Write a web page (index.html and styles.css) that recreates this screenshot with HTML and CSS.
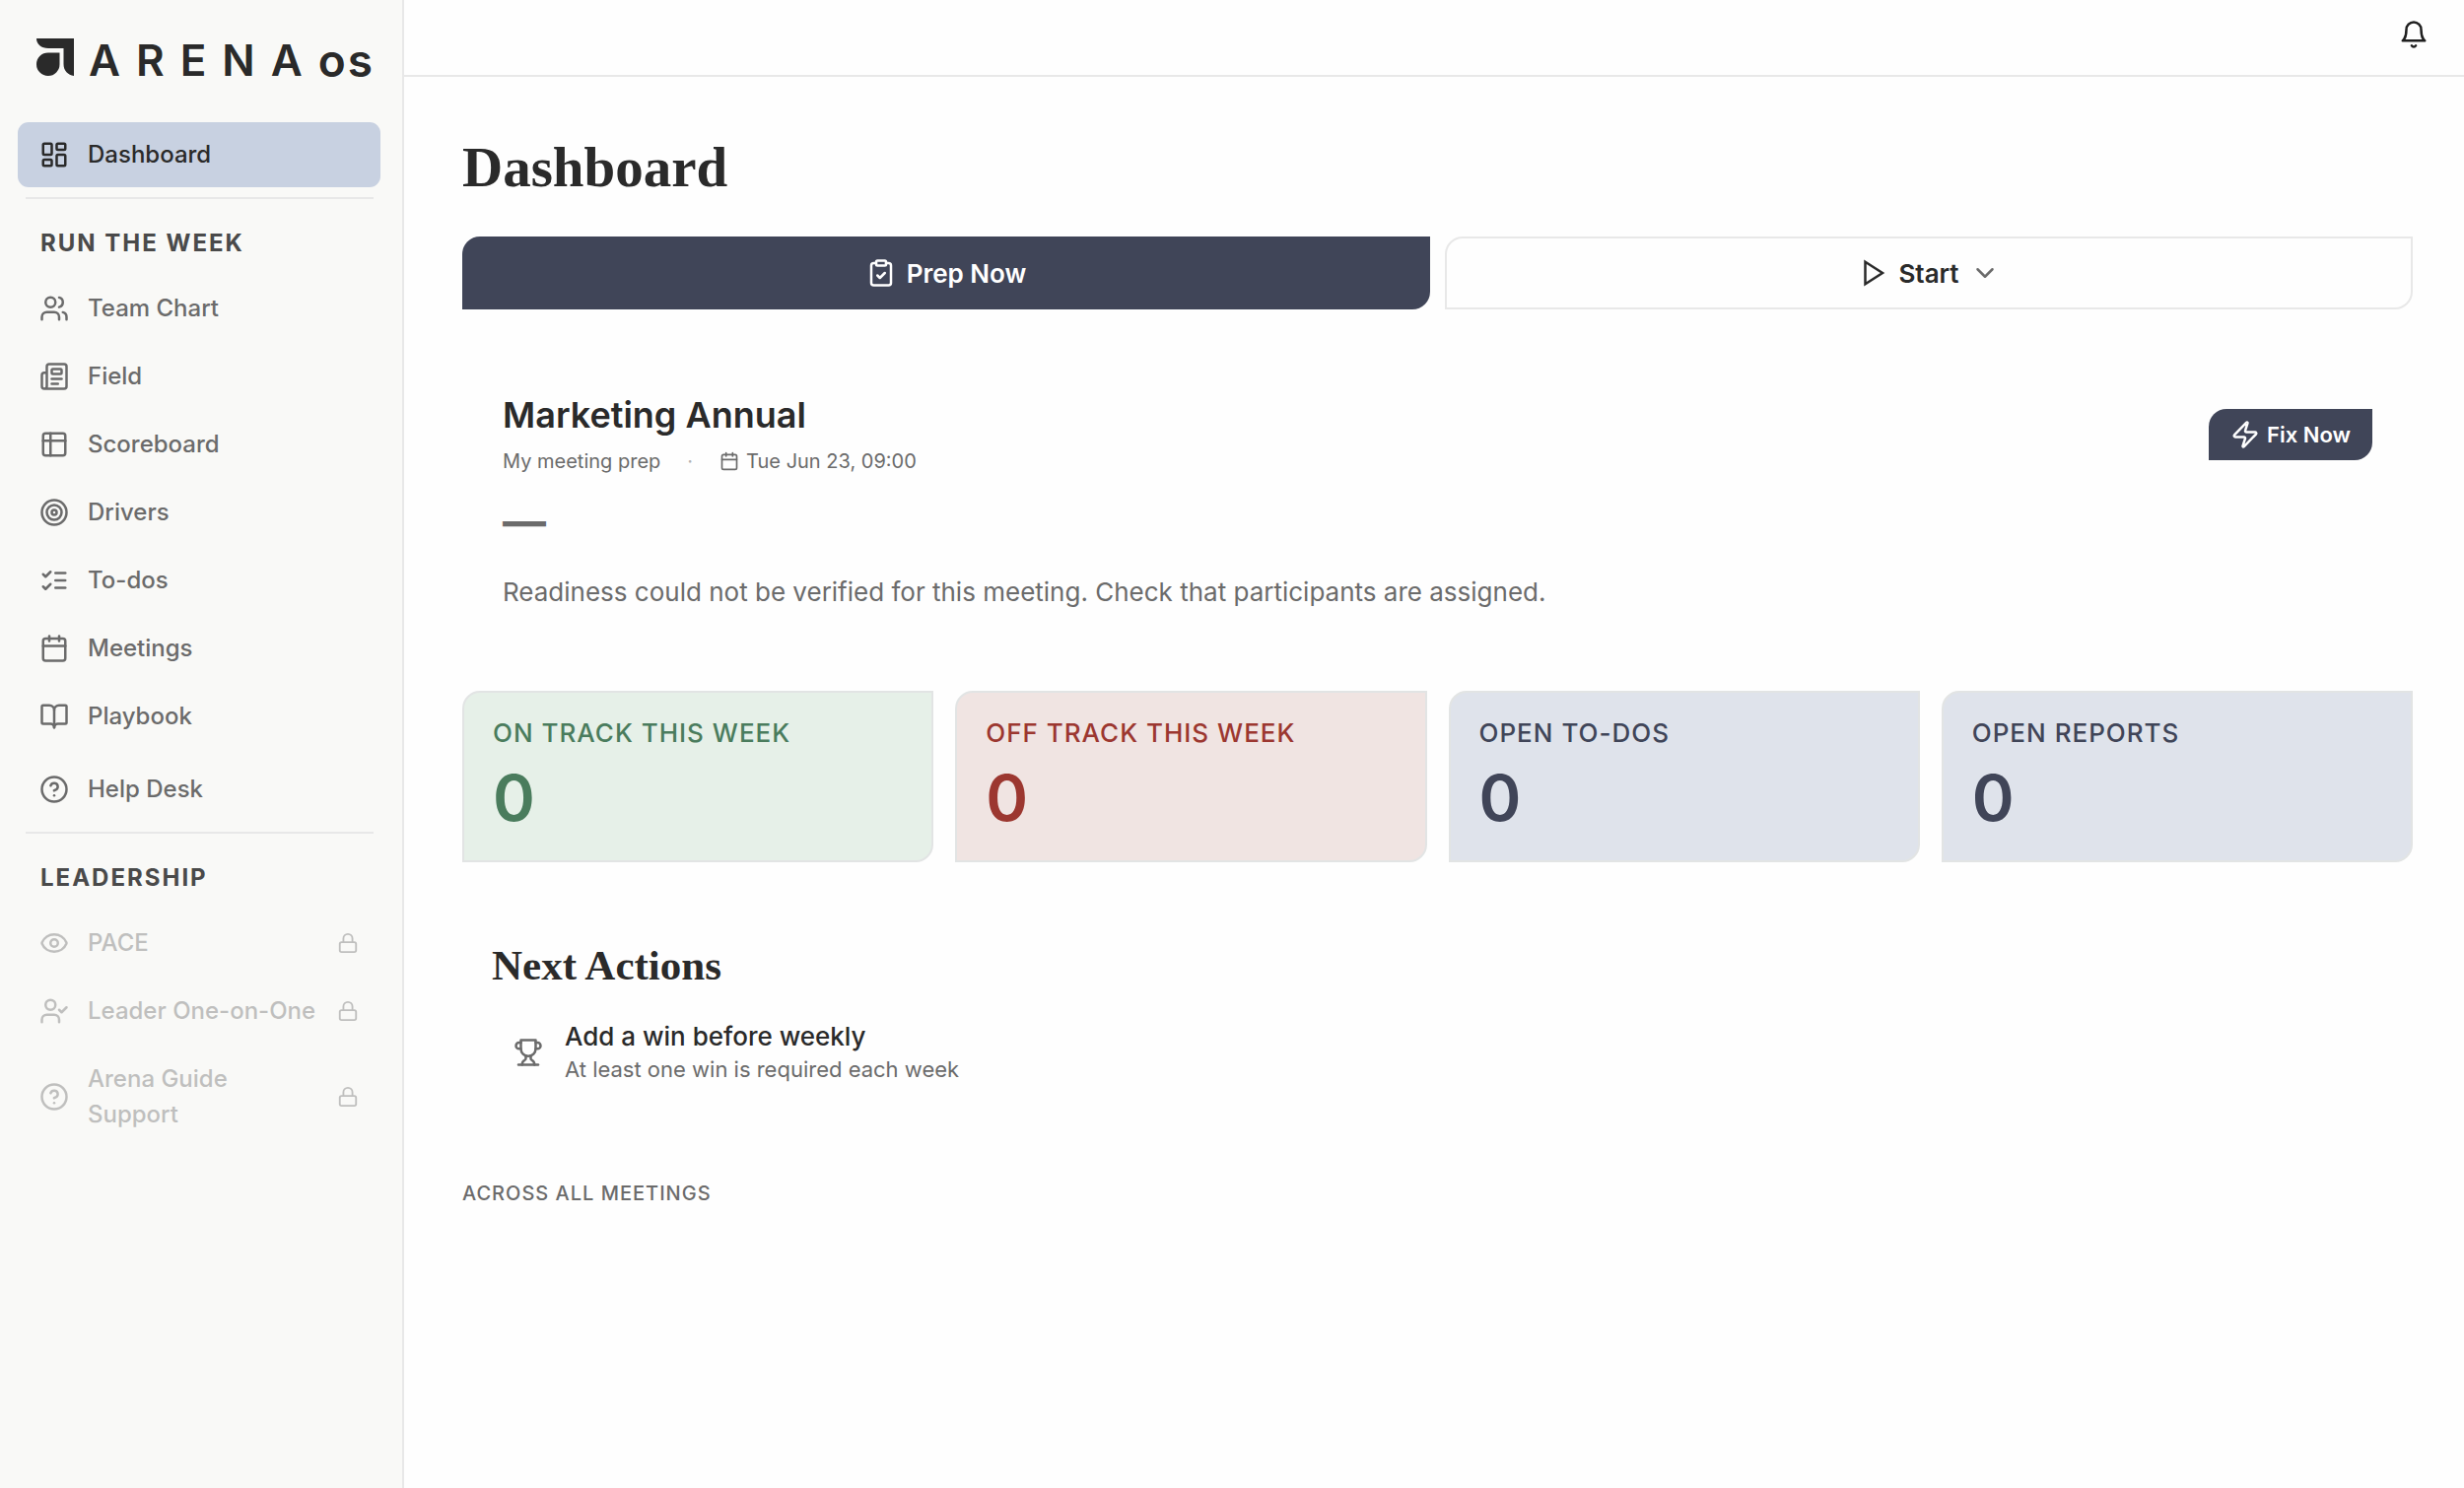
FILE: index.html
```html
<!DOCTYPE html>
<html lang="en">
<head>
    <meta charset="UTF-8">
    <meta name="viewport" content="width=device-width, initial-scale=1.0">
    <title>Dashboard - Arena OS</title>
    <link rel="stylesheet" href="styles.css">
</head>
<body>
    <div class="app">
        <!-- Sidebar -->
        <aside class="sidebar">
            <a class="logo" href="#" aria-label="Arena OS">
                <svg class="logo-mark" viewBox="0 0 38 38">
                    <path d="M0 0H38V38C32 37 27.500 33 27.500 26V10H12C5 10 0 6 0 0Z"/>
                    <path d="M12 14.500H23.500V26A11.750 11.750 0 1 1 12 14.500Z"/>
                </svg>
                <span class="logo-name">ARENA</span>
                <span class="logo-suffix">os</span>
            </a>

            <nav>
                <ul class="nav-list">
                    <li><a class="nav-link active" href="#">
                        <svg class="icon" viewBox="0 0 24 24"><rect x="3" y="3" width="7" height="9" rx="1"/><rect x="14" y="3" width="7" height="5" rx="1"/><rect x="14" y="12" width="7" height="9" rx="1"/><rect x="3" y="16" width="7" height="5" rx="1"/></svg>
                        <span>Dashboard</span>
                    </a></li>
                </ul>

                <h2 class="nav-heading">RUN THE WEEK</h2>
                <ul class="nav-list">
                    <li><a class="nav-link" href="#">
                        <svg class="icon" viewBox="0 0 24 24"><path d="M16 21v-2a4 4 0 0 0-4-4H6a4 4 0 0 0-4 4v2"/><circle cx="9" cy="7" r="4"/><path d="M22 21v-2a4 4 0 0 0-3-3.870"/><path d="M16 3.130a4 4 0 0 1 0 7.750"/></svg>
                        <span>Team Chart</span>
                    </a></li>
                    <li><a class="nav-link" href="#">
                        <svg class="icon" viewBox="0 0 24 24"><path d="M15 18h-5"/><path d="M18 14h-8"/><path d="M4 22h16a2 2 0 0 0 2-2V4a2 2 0 0 0-2-2H8a2 2 0 0 0-2 2v16a2 2 0 0 1-4 0v-9a2 2 0 0 1 2-2h2"/><rect width="8" height="4" x="10" y="6" rx="1"/></svg>
                        <span>Field</span>
                    </a></li>
                    <li><a class="nav-link" href="#">
                        <svg class="icon" viewBox="0 0 24 24"><rect x="3" y="3" width="18" height="18" rx="2"/><path d="M3 9h18"/><path d="M9 3v18"/></svg>
                        <span>Scoreboard</span>
                    </a></li>
                    <li><a class="nav-link" href="#">
                        <svg class="icon" viewBox="0 0 24 24"><circle cx="12" cy="12" r="10"/><circle cx="12" cy="12" r="6"/><circle cx="12" cy="12" r="2"/></svg>
                        <span>Drivers</span>
                    </a></li>
                    <li><a class="nav-link" href="#">
                        <svg class="icon" viewBox="0 0 24 24"><path d="m3 17 2 2 4-4"/><path d="m3 7 2 2 4-4"/><path d="M13 6h8"/><path d="M13 12h8"/><path d="M13 18h8"/></svg>
                        <span>To-dos</span>
                    </a></li>
                    <li><a class="nav-link" href="#">
                        <svg class="icon" viewBox="0 0 24 24"><path d="M8 2v4"/><path d="M16 2v4"/><rect width="18" height="18" x="3" y="4" rx="2"/><path d="M3 10h18"/></svg>
                        <span>Meetings</span>
                    </a></li>
                    <li><a class="nav-link" href="#">
                        <svg class="icon" viewBox="0 0 24 24"><path d="M12 7v14"/><path d="M3 18a1 1 0 0 1-1-1V4a1 1 0 0 1 1-1h5a4 4 0 0 1 4 4 4 4 0 0 1 4-4h5a1 1 0 0 1 1 1v13a1 1 0 0 1-1 1h-6a3 3 0 0 0-3 3 3 3 0 0 0-3-3z"/></svg>
                        <span>Playbook</span>
                    </a></li>
                </ul>
                <ul class="nav-list nav-help">
                    <li><a class="nav-link" href="#">
                        <svg class="icon" viewBox="0 0 24 24"><circle cx="12" cy="12" r="10"/><path d="M9.090 9a3 3 0 0 1 5.830 1c0 2-3 3-3 3"/><path d="M12 17h.01"/></svg>
                        <span>Help Desk</span>
                    </a></li>
                </ul>

                <h2 class="nav-heading">LEADERSHIP</h2>
                <ul class="nav-list">
                    <li><a class="nav-link locked" href="#" aria-disabled="true">
                        <svg class="icon" viewBox="0 0 24 24"><path d="M2.062 12.348a1 1 0 0 1 0-.696 10.750 10.750 0 0 1 19.876 0 1 1 0 0 1 0 .696 10.750 10.750 0 0 1-19.876 0"/><circle cx="12" cy="12" r="3"/></svg>
                        <span>PACE</span>
                        <svg class="icon lock" viewBox="0 0 24 24"><rect width="18" height="11" x="3" y="11" rx="2"/><path d="M7 11V7a5 5 0 0 1 10 0v4"/></svg>
                    </a></li>
                    <li><a class="nav-link locked" href="#" aria-disabled="true">
                        <svg class="icon" viewBox="0 0 24 24"><path d="m16 11 2 2 4-4"/><path d="M16 21v-2a4 4 0 0 0-4-4H6a4 4 0 0 0-4 4v2"/><circle cx="9" cy="7" r="4"/></svg>
                        <span>Leader One-on-One</span>
                        <svg class="icon lock" viewBox="0 0 24 24"><rect width="18" height="11" x="3" y="11" rx="2"/><path d="M7 11V7a5 5 0 0 1 10 0v4"/></svg>
                    </a></li>
                    <li><a class="nav-link locked" href="#" aria-disabled="true">
                        <svg class="icon" viewBox="0 0 24 24"><circle cx="12" cy="12" r="10"/><path d="M9.090 9a3 3 0 0 1 5.830 1c0 2-3 3-3 3"/><path d="M12 17h.01"/></svg>
                        <span>Arena Guide Support</span>
                        <svg class="icon lock" viewBox="0 0 24 24"><rect width="18" height="11" x="3" y="11" rx="2"/><path d="M7 11V7a5 5 0 0 1 10 0v4"/></svg>
                    </a></li>
                </ul>
            </nav>
        </aside>

        <div class="page">
            <header class="topbar">
                <button class="bell-button" type="button" aria-label="Notifications">
                    <svg class="icon" viewBox="0 0 24 24"><path d="M6 8a6 6 0 0 1 12 0c0 7 3 9 3 9H3s3-2 3-9"/><path d="M10.300 21a1.940 1.940 0 0 0 3.400 0"/></svg>
                </button>
            </header>

            <main class="content">
                <h1>Dashboard</h1>

                <div class="actions">
                    <button class="btn btn-primary" type="button">
                        <svg class="icon" viewBox="0 0 24 24"><rect width="8" height="4" x="8" y="2" rx="1"/><path d="M16 4h2a2 2 0 0 1 2 2v14a2 2 0 0 1-2 2H6a2 2 0 0 1-2-2V6a2 2 0 0 1 2-2h2"/><path d="m9 14 2 2 4-4"/></svg>
                        Prep Now
                    </button>
                    <button class="btn btn-outline" type="button">
                        <svg class="icon play" viewBox="0 0 24 24"><path d="M6 3 20 12 6 21Z"/></svg>
                        Start
                        <svg class="icon chevron" viewBox="0 0 24 24"><path d="m6 9 6 6 6-6"/></svg>
                    </button>
                </div>

                <!-- Next meeting -->
                <section class="meeting">
                    <div class="meeting-top">
                        <div>
                            <h2>Marketing Annual</h2>
                            <div class="meeting-meta">
                                <span>My meeting prep</span>
                                <span class="dot">·</span>
                                <span class="meeting-date">
                                    <svg class="icon" viewBox="0 0 24 24"><path d="M8 2v4"/><path d="M16 2v4"/><rect width="18" height="18" x="3" y="4" rx="2"/><path d="M3 10h18"/></svg>
                                    Tue Jun 23, 09:00
                                </span>
                            </div>
                        </div>
                        <button class="btn-fix" type="button">
                            <svg class="icon" viewBox="0 0 24 24"><path d="M4 14a1 1 0 0 1-.780-1.630l9.900-10.200a.5.5 0 0 1 .860.460l-1.920 6.020A1 1 0 0 0 13 10h7a1 1 0 0 1 .780 1.630l-9.900 10.200a.5.5 0 0 1-.860-.460l1.920-6.020A1 1 0 0 0 11 14z"/></svg>
                            Fix Now
                        </button>
                    </div>
                    <div class="readiness">—</div>
                    <p class="meeting-note">Readiness could not be verified for this meeting. Check that participants are assigned.</p>
                </section>

                <!-- Counters -->
                <section class="stats">
                    <div class="stat green">
                        <div class="stat-label">ON TRACK THIS WEEK</div>
                        <div class="stat-value">0</div>
                    </div>
                    <div class="stat red">
                        <div class="stat-label">OFF TRACK THIS WEEK</div>
                        <div class="stat-value">0</div>
                    </div>
                    <div class="stat blue">
                        <div class="stat-label">OPEN TO-DOS</div>
                        <div class="stat-value">0</div>
                    </div>
                    <div class="stat blue">
                        <div class="stat-label">OPEN REPORTS</div>
                        <div class="stat-value">0</div>
                    </div>
                </section>

                <section class="next">
                    <h2>Next Actions</h2>
                    <a class="next-item" href="#">
                        <svg class="icon" viewBox="0 0 24 24"><path d="M6 9H4.500a2.500 2.500 0 0 1 0-5H6"/><path d="M18 9h1.500a2.500 2.500 0 0 0 0-5H18"/><path d="M4 22h16"/><path d="M10 14.660V17c0 .550-.470.980-.970 1.210C7.850 18.750 7 20.240 7 22"/><path d="M14 14.660V17c0 .550.470.980.970 1.210C16.150 18.750 17 20.240 17 22"/><path d="M18 2H6v7a6 6 0 0 0 12 0V2Z"/></svg>
                        <span class="next-text">
                            <span class="next-title">Add a win before weekly</span>
                            <span class="next-sub">At least one win is required each week</span>
                        </span>
                    </a>
                </section>

                <h3 class="across">ACROSS ALL MEETINGS</h3>
            </main>
        </div>
    </div>
</body>
</html>
```
FILE: styles.css
```css
* {
  margin: 0;
  padding: 0;
  box-sizing: border-box;
}

body {
  font-family: Inter, "Liberation Sans", sans-serif;
  font-size: 24px;
  line-height: 36px;
  color: #2a2a2a;
  background-color: #fefefe;
}

a {
  color: inherit;
  text-decoration: none;
}

button {
  font-family: inherit;
  cursor: pointer;
}

ul {
  list-style: none;
}

.icon {
  width: 30px;
  height: 30px;
  flex-shrink: 0;
  fill: none;
  stroke: currentColor;
  stroke-width: 2;
  stroke-linecap: round;
  stroke-linejoin: round;
}

.app {
  display: flex;
  min-height: 100vh;
}

/* Sidebar */
.sidebar {
  width: 410px;
  flex-shrink: 0;
  padding: 39px 22px 38px 18px;
  background-color: #f9f9f7;
  border-right: 2px solid #e8e8e8;
}

.logo {
  display: flex;
  align-items: flex-end;
  height: 38px;
  margin: 0 0 47px 19px;
  line-height: 32px;
  font-weight: 600;
}

.logo-mark {
  width: 38px;
  height: 38px;
  margin-right: 15px;
  fill: #2a2a2a;
}

.logo-name {
  font-size: 44px;
  letter-spacing: 16px;
}

.logo-suffix {
  font-size: 46px;
  letter-spacing: 2px;
}

.nav-list {
  display: flex;
  flex-direction: column;
  gap: 3px;
}

.nav-help {
  margin-top: 8px;
}

.nav-link {
  display: flex;
  align-items: center;
  gap: 19px;
  padding: 15px 22px;
  border-radius: 11px;
  font-weight: 500;
  color: #6b6b6b;
}

.nav-link span {
  flex: 1;
}

.nav-link.active {
  background-color: #c8d1e1;
  color: #2a2a2a;
}

.nav-link.locked {
  opacity: 0.4;
}

.nav-link .lock {
  width: 22px;
  height: 22px;
}

.nav-heading {
  margin: 10px 7px 0 8px;
  padding: 27px 15px 15px;
  border-top: 2px solid #e8e8e8;
  font-size: 24px;
  font-weight: 700;
  letter-spacing: 2px;
  color: #4a4a4a;
}

/* Top bar */
.page {
  flex: 1;
  min-width: 0;
}

.topbar {
  display: flex;
  justify-content: flex-end;
  padding: 20px 36px 26px;
  border-bottom: 2px solid #e8e8e8;
}

.bell-button {
  display: flex;
  border: none;
  background: none;
  color: #1f1f1f;
}

.content {
  padding: 58px 52px 59px 59px;
}

h1,
.next h2 {
  font-family: "Liberation Serif", serif;
  font-weight: 700;
}

h1 {
  font-size: 57px;
  line-height: 68px;
}

/* Buttons */
.actions {
  display: grid;
  grid-template-columns: 1fr 1fr;
  gap: 15px;
  margin-top: 36px;
}

.btn {
  display: flex;
  justify-content: center;
  align-items: center;
  gap: 11px;
  height: 74px;
  border-radius: 18px 0;
  font-size: 26px;
  font-weight: 600;
}

.btn-primary {
  border: none;
  background-color: #404558;
  color: #fff;
}

.btn-outline {
  border: 2px solid #e8e8e8;
  background-color: #fefefe;
  color: #2a2a2a;
}

.play {
  stroke-linejoin: miter;
}

.chevron {
  color: #6b6b6b;
}

/* Meeting card */
.meeting {
  padding: 83px 41px 0;
}

.meeting-top {
  display: flex;
  justify-content: space-between;
  align-items: center;
}

.meeting h2 {
  font-size: 36px;
  line-height: 48px;
  font-weight: 600;
}

.meeting-meta {
  display: flex;
  align-items: center;
  gap: 27px;
  margin-top: 7px;
  font-size: 20px;
  line-height: 32px;
  color: #6b6b6b;
}

.dot {
  opacity: 0.5;
}

.meeting-date {
  display: flex;
  align-items: center;
  gap: 7px;
}

.meeting-date .icon {
  width: 20px;
  height: 20px;
}

.btn-fix {
  display: flex;
  align-items: center;
  gap: 7px;
  height: 52px;
  padding: 0 22px;
  border: none;
  border-radius: 18px 0;
  background-color: #404558;
  color: #fff;
  font-size: 22px;
  font-weight: 600;
}

.readiness {
  margin-top: 17px;
  font-size: 44px;
  line-height: 56px;
  font-weight: 700;
  color: #6b6b6b;
}

.meeting-note {
  margin-top: 24px;
  font-size: 26px;
  line-height: 40px;
  color: #6b6b6b;
}

/* Stats */
.stats {
  display: grid;
  grid-template-columns: repeat(4, 1fr);
  gap: 22px;
  margin-top: 80px;
}

.stat {
  padding: 21px 29px 26px;
  border: 2px solid #e2e4e4;
  border-radius: 18px 0;
}

.stat-label {
  font-size: 26px;
  line-height: 40px;
  font-weight: 500;
  letter-spacing: 1px;
}

.stat-value {
  margin-top: 9px;
  font-size: 65px;
  line-height: 74px;
  font-weight: 600;
}

.green {
  background-color: #e6f0e8;
  color: #4a7c5d;
}

.red {
  background-color: #f0e4e2;
  color: #9c3730;
}

.blue {
  background-color: #dfe3eb;
  color: #404558;
}

/* Next actions */
.next {
  padding: 77px 30px 0;
}

.next h2 {
  font-size: 43px;
  line-height: 56px;
}

.next-item {
  display: flex;
  align-items: center;
  gap: 22px;
  margin-top: 27px;
  padding: 0 22px;
}

.next-item .icon {
  color: #6b6b6b;
}

.next-text {
  display: flex;
  flex-direction: column;
}

.next-title {
  font-size: 26px;
  line-height: 34px;
  font-weight: 500;
}

.next-sub {
  font-size: 22px;
  line-height: 32px;
  color: #6b6b6b;
}

.across {
  margin-top: 94px;
  font-size: 20px;
  line-height: 32px;
  font-weight: 500;
  letter-spacing: 1px;
  color: #6b6b6b;
}
```
